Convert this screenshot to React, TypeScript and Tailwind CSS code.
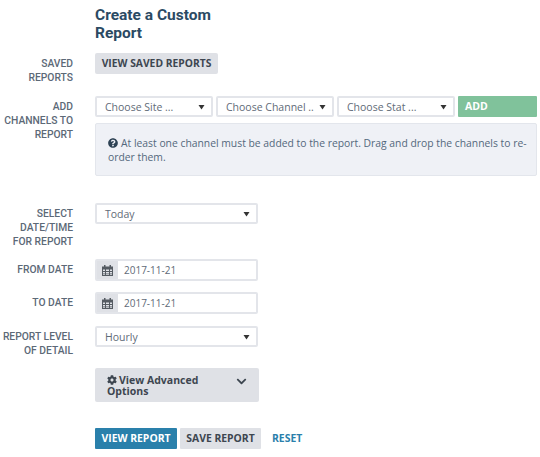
import type { ReactNode } from 'react';
import { FaChevronDown, FaCog, FaQuestionCircle } from 'react-icons/fa';

const openSans = "font-['Open_Sans',sans-serif]";

function Caret() {
  return (
    <svg className="w-[7px] h-[6px] shrink-0 text-[#333]" viewBox="0 0 7 6" fill="currentColor">
      <path d="M0.5 1h6L3.5 5.5z" />
    </svg>
  );
}

function CalendarIcon() {
  return (
    <svg className="w-[11px] h-[11px] text-[#555b62]" viewBox="0 0 11 11" fill="currentColor">
      <path
        fillRule="evenodd"
        d="M2 0h1.500v1.500h4V0H9v1.500h2V11H0V1.500h2zM1 4.500V6h2V4.500zm3 0V6h3V4.500zm4 0V6h2V4.500zM1 7v1.500h2V7zm3 0v1.500h3V7zm4 0v1.500h2V7zM1 9.300V10h2v-.7zm3 0V10h3v-.7zm4 0V10h2v-.7z"
      />
    </svg>
  );
}

function SelectBox({ label, className = '' }: { label: string; className?: string }) {
  return (
    <div className={`h-[21px] flex items-center justify-between bg-white border-2 border-[#e3e5ea] rounded-[2px] pl-[8px] pr-[6px] text-[10.5px] text-[#5f6b78] ${className}`}>
      <span className="whitespace-nowrap pt-[2px]">{label}</span>
      <Caret />
    </div>
  );
}

function DateField({ value }: { value: string }) {
  return (
    <div className="h-[22px] w-[163px] flex border-2 border-[#e3e5ea] rounded-[2px] bg-white">
      <div className="w-[21px] bg-[#dfe1e6] flex items-center justify-center">
        <CalendarIcon />
      </div>
      <div className="flex-1 flex items-center pl-[6px] text-[10px] text-[#5f6b78]">{value}</div>
    </div>
  );
}

function Row({ label, className = '', children }: { label: ReactNode; className?: string; children: ReactNode }) {
  return (
    <div className={`flex ${className}`}>
      <div className="w-[73px] shrink-0 text-right font-['Roboto',sans-serif] font-medium text-[10.3px] leading-[14px] uppercase text-[#5c6977] pt-[4px]">
        {label}
      </div>
      <div className="ml-[22px] flex-1 min-w-0">{children}</div>
    </div>
  );
}

export default function App() {
  return (
    <div className={`w-[540px] h-[457px] bg-white overflow-hidden pt-[6px] pr-[3px] ${openSans}`}>
      <h1 className="ml-[95px] w-[140px] h-[36px] font-['Roboto',sans-serif] font-bold text-[15.5px] leading-[18px] text-[#2b4a63]">
        Create a Custom Report
      </h1>

      <Row label="Saved Reports" className="mt-[11px] h-[31px]">
        <button className="block h-[21px] w-[123px] bg-[#dfe1e6] rounded-[2px] text-[10.3px] font-bold text-[#3d4650] uppercase">
          View Saved Reports
        </button>
      </Row>

      <Row label={<>Add<br />Channels to<br />Report</>} className="mt-[12px]">
        <div className="flex gap-[3px]">
          <SelectBox label="Choose Site ..." className="w-[118px]" />
          <SelectBox label="Choose Channel .." className="w-[118px]" />
          <SelectBox label="Choose Stat ..." className="w-[118px]" />
          <button className="h-[21px] w-[79px] bg-[#80c29b] rounded-[1px] text-left pl-[7px] text-[10.5px] font-bold text-white">
            ADD
          </button>
        </div>
        <div className="mt-[6px] h-[53px] bg-[#eff1f6] border border-[#e3e6ec] rounded-[2px] pl-[12px] pr-[4px] pt-[12px] text-[10.35px] leading-[14px] text-[#53687c]">
          <FaQuestionCircle className="inline-block w-[10px] h-[10px] mr-[3px] -mt-[2px] text-[#2e4254]" />
          At least one channel must be added to the report. Drag and drop the channels to re-order them.
        </div>
      </Row>

      <Row label={<>Select<br />Date/Time<br />for Report</>} className="mt-[27px] h-[45px]">
        <SelectBox label="Today" className="w-[163px]" />
      </Row>

      <Row label="From Date" className="mt-[11px]">
        <DateField value="2017-11-21" />
      </Row>

      <Row label="To Date" className="mt-[11px]">
        <DateField value="2017-11-21" />
      </Row>

      <Row label={<>Report Level<br />of Detail</>} className="mt-[12px] h-[31px]">
        <SelectBox label="Hourly" className="w-[163px]" />
      </Row>

      <div className="ml-[95px] mt-[11px] w-[164px] h-[34px] bg-[#dfe1e6] rounded-[2px] pl-[12px] pr-[12px] pt-[7px] flex justify-between text-[10.5px] leading-[11px] font-bold text-[#3d4650]">
        <span className="w-[100px]">
          <FaCog className="inline-block w-[10px] h-[10px] mr-[2px] -mt-[2px]" />
          View Advanced Options
        </span>
        <FaChevronDown className="w-[11px] h-[11px] mt-[1px]" />
      </div>

      <div className="ml-[95px] mt-[26px] flex items-center gap-[3px] text-[10.4px] font-bold uppercase">
        <button className="h-[21px] w-[82px] bg-[#2a80ab] rounded-[1px] text-white uppercase font-bold">View Report</button>
        <button className="h-[21px] w-[81px] bg-[#dfe1e6] rounded-[1px] text-[#3d4650] uppercase font-bold">Save Report</button>
        <a className="ml-[8px] text-[#2a80ab]">Reset</a>
      </div>
    </div>
  );
}
